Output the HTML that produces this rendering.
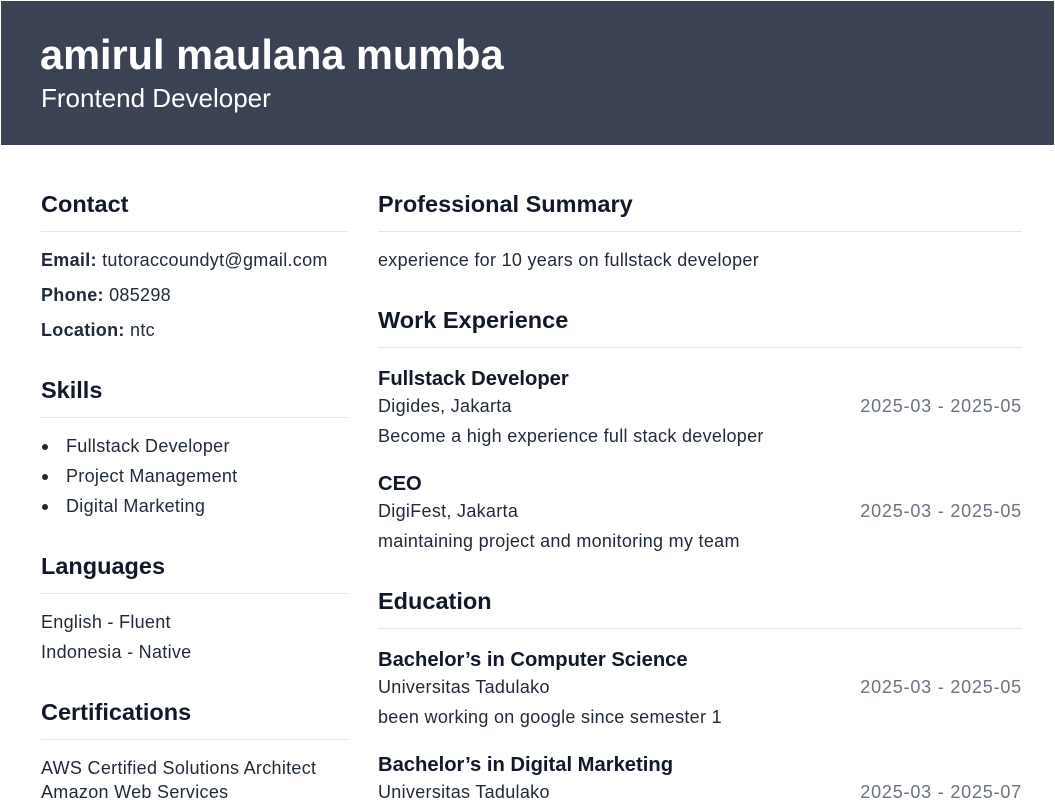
<!DOCTYPE html>
<html><head><meta charset="utf-8"><style>
*{margin:0;padding:0;box-sizing:border-box}
body{width:1055px;height:792px;overflow:hidden;background:#fff;font-family:"Liberation Sans",sans-serif;color:#1f2937;position:relative}
.hdr{position:absolute;left:1px;top:1px;width:1053px;height:144px;background:#3a4253}
.t{position:absolute;line-height:20px;font-size:18px;letter-spacing:0.3px;white-space:nowrap}
.h{position:absolute;line-height:28px;font-size:23.5px;font-weight:bold;color:#111827;white-space:nowrap}
.it{position:absolute;line-height:24px;font-size:20.2px;font-weight:bold;color:#111827;white-space:nowrap}
.ln{position:absolute;height:1px;background:#e5e7eb}
.d{position:absolute;line-height:20px;font-size:18px;letter-spacing:0.8px;color:#6b7280;right:33px;white-space:nowrap}
.dot{position:absolute;left:42px;width:6px;height:6px;border-radius:50%;background:#1f2937}
b{font-weight:bold}
</style></head><body>
<div class="hdr"></div>
<div style="position:absolute;left:40px;top:32px;font-size:41.5px;line-height:46px;font-weight:bold;color:#fff">amirul maulana mumba</div>
<div style="position:absolute;left:41px;top:84px;font-size:26px;line-height:28px;color:#fff">Frontend Developer</div>

<div class="h" style="left:41px;top:190px">Contact</div>
<div class="ln" style="left:41px;top:231px;width:307px"></div>
<div class="t" style="left:41px;top:250px"><b>Email:</b> tutoraccoundyt@gmail.com</div>
<div class="t" style="left:41px;top:285px"><b>Phone:</b> 085298</div>
<div class="t" style="left:41px;top:320px"><b>Location:</b> ntc</div>

<div class="h" style="left:41px;top:376px">Skills</div>
<div class="ln" style="left:41px;top:417px;width:307px"></div>
<div class="dot" style="top:444px"></div><div class="t" style="left:66px;top:436px">Fullstack Developer</div>
<div class="dot" style="top:474px"></div><div class="t" style="left:66px;top:466px">Project Management</div>
<div class="dot" style="top:504px"></div><div class="t" style="left:66px;top:496px">Digital Marketing</div>

<div class="h" style="left:41px;top:552px">Languages</div>
<div class="ln" style="left:41px;top:593px;width:307px"></div>
<div class="t" style="left:41px;top:612px">English - Fluent</div>
<div class="t" style="left:41px;top:642px">Indonesia - Native</div>

<div class="h" style="left:41px;top:698px">Certifications</div>
<div class="ln" style="left:41px;top:739px;width:307px"></div>
<div class="t" style="left:41px;top:758px">AWS Certified Solutions Architect</div>
<div class="t" style="left:41px;top:782px">Amazon Web Services</div>

<div class="h" style="left:378px;top:190px">Professional Summary</div>
<div class="ln" style="left:378px;top:231px;width:644px"></div>
<div class="t" style="left:378px;top:250px">experience for 10 years on fullstack developer</div>

<div class="h" style="left:378px;top:306px">Work Experience</div>
<div class="ln" style="left:378px;top:347px;width:644px"></div>
<div class="it" style="left:378px;top:367px">Fullstack Developer</div>
<div class="t" style="left:378px;top:396px">Digides, Jakarta</div><div class="d" style="top:396px">2025-03 - 2025-05</div>
<div class="t" style="left:378px;top:426px">Become a high experience full stack developer</div>
<div class="it" style="left:378px;top:472px">CEO</div>
<div class="t" style="left:378px;top:501px">DigiFest, Jakarta</div><div class="d" style="top:501px">2025-03 - 2025-05</div>
<div class="t" style="left:378px;top:531px">maintaining project and monitoring my team</div>

<div class="h" style="left:378px;top:587px">Education</div>
<div class="ln" style="left:378px;top:628px;width:644px"></div>
<div class="it" style="left:378px;top:648px">Bachelor’s in Computer Science</div>
<div class="t" style="left:378px;top:677px">Universitas Tadulako</div><div class="d" style="top:677px">2025-03 - 2025-05</div>
<div class="t" style="left:378px;top:707px">been working on google since semester 1</div>
<div class="it" style="left:378px;top:753px">Bachelor’s in Digital Marketing</div>
<div class="t" style="left:378px;top:782px">Universitas Tadulako</div><div class="d" style="top:782px">2025-03 - 2025-07</div>
</body></html>
